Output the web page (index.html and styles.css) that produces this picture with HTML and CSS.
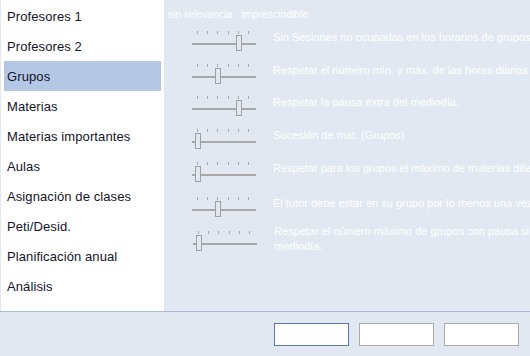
FILE: index.html
```html
<!DOCTYPE html>
<html lang="es">
<head>
<meta charset="utf-8">
<title>Grupos</title>
<link rel="stylesheet" href="styles.css">
</head>
<body>
<div class="top">
  <nav class="nav">
    <div class="nav-item">Profesores 1</div>
    <div class="nav-item">Profesores 2</div>
    <div class="nav-item selected">Grupos</div>
    <div class="nav-item">Materias</div>
    <div class="nav-item">Materias importantes</div>
    <div class="nav-item">Aulas</div>
    <div class="nav-item">Asignación de clases</div>
    <div class="nav-item">Peti/Desid.</div>
    <div class="nav-item">Planificación anual</div>
    <div class="nav-item">Análisis</div>
  </nav>
  <main class="content">
    <div class="scale"><span>sin relevancia</span><span>imprescindible</span></div>
    <div class="rows">
      <div class="row">
        <div class="slider"><div class="ticks"><i></i><i></i><i></i><i></i><i></i><i></i></div><div class="track"></div><div class="thumb" style="left:44px"></div></div>
        <div class="label">Sin Sesiones no ocupadas en los horarios de grupos</div>
      </div>
      <div class="row">
        <div class="slider"><div class="ticks"><i></i><i></i><i></i><i></i><i></i><i></i></div><div class="track"></div><div class="thumb" style="left:23px"></div></div>
        <div class="label">Respetar el número mín. y máx. de las horas diarias de los grupos</div>
      </div>
      <div class="row">
        <div class="slider"><div class="ticks"><i></i><i></i><i></i><i></i><i></i><i></i></div><div class="track"></div><div class="thumb" style="left:44px"></div></div>
        <div class="label">Respetar la pausa extra del mediodía.</div>
      </div>
      <div class="row">
        <div class="slider"><div class="ticks"><i></i><i></i><i></i><i></i><i></i><i></i></div><div class="track"></div><div class="thumb" style="left:3px"></div></div>
        <div class="label">Sucesión de mat. (Grupos)</div>
      </div>
      <div class="row">
        <div class="slider"><div class="ticks"><i></i><i></i><i></i><i></i><i></i><i></i></div><div class="track"></div><div class="thumb" style="left:3px"></div></div>
        <div class="label">Respetar para los grupos el máximo de materias diferentes por día</div>
      </div>
      <div class="row">
        <div class="slider"><div class="ticks"><i></i><i></i><i></i><i></i><i></i><i></i></div><div class="track"></div><div class="thumb" style="left:23px"></div></div>
        <div class="label">El tutor debe estar en su grupo por lo menos una vez al día</div>
      </div>
      <div class="row">
        <div class="slider shifted"><div class="ticks"><i></i><i></i><i></i><i></i><i></i><i></i></div><div class="track"></div><div class="thumb" style="left:3px"></div></div>
        <div class="label two-line">Respetar el número máximo de grupos con pausa simultánea al<br>mediodía.</div>
      </div>
    </div>
  </main>
</div>
<footer class="footer">
  <button class="btn default" type="button"></button>
  <button class="btn" type="button"></button>
  <button class="btn" type="button"></button>
</footer>
</body>
</html>
```
FILE: styles.css
```css
html, body {
  margin: 0;
  padding: 0;
}
body {
  width: 530px;
  height: 356px;
  overflow: hidden;
  background: #e1e8f1;
  font-family: "Liberation Sans", Arial, sans-serif;
}
.top {
  display: flex;
  height: 312px;
  border-bottom: 1px solid #a9bcd8;
  box-sizing: border-box;
}
.nav {
  width: 163px;
  height: 311px;
  margin-left: 1px;
  padding-top: 2px;
  box-sizing: border-box;
  background: #ffffff;
  flex: none;
}
.nav-item {
  height: 30px;
  line-height: 30px;
  margin: 0 3px;
  padding-left: 3px;
  font-size: 13px;
  letter-spacing: 0.1px;
  color: #14142a;
  white-space: nowrap;
}
.nav-item.selected {
  background: #b4c8e6;
  margin-top: -1px;
  margin-bottom: 1px;
  line-height: 32px;
}
.content {
  flex: 1;
  min-width: 0;
  overflow: hidden;
  padding: 8px 0 0 4px;
}
.scale {
  display: flex;
  gap: 9px;
  font-size: 10.5px;
  line-height: 13px;
  color: #ffffff;
  white-space: nowrap;
}
.rows {
  display: grid;
  grid-template-rows: 33px 32px 33px 33px 35px 34px auto;
  margin-top: 10px;
}
.row {
  display: flex;
  align-items: flex-start;
}
.slider {
  position: relative;
  flex: none;
  width: 64px;
  height: 21px;
  margin-left: 24px;
}
.slider.shifted {
  margin-left: 25px;
}
.ticks {
  display: flex;
  justify-content: space-between;
  width: 52px;
  height: 3px;
  padding-left: 5px;
}
.ticks i {
  display: block;
  width: 1px;
  height: 3px;
  background: #a8a8a8;
}
.track {
  height: 2px;
  margin-top: 9px;
  background: #a8a8a8;
}
.thumb {
  position: absolute;
  top: 4px;
  width: 6px;
  height: 16px;
  box-sizing: border-box;
  border: 1px solid #a0a0a0;
  background: #e1e8f1;
}
.label {
  margin: -1px 0 0 17px;
  font-size: 11px;
  line-height: 14px;
  color: #ffffff;
  white-space: nowrap;
}
.label.two-line {
  margin-top: -7px;
  line-height: 15px;
}
.footer {
  display: flex;
  justify-content: flex-end;
  gap: 10px;
  padding: 11px 11px 0 0;
}
.btn {
  width: 75px;
  height: 23px;
  margin: 0;
  padding: 0;
  box-sizing: border-box;
  border: 1px solid #adadad;
  background: #ffffff;
}
.btn.default {
  border-color: #5a78b0;
}
```
